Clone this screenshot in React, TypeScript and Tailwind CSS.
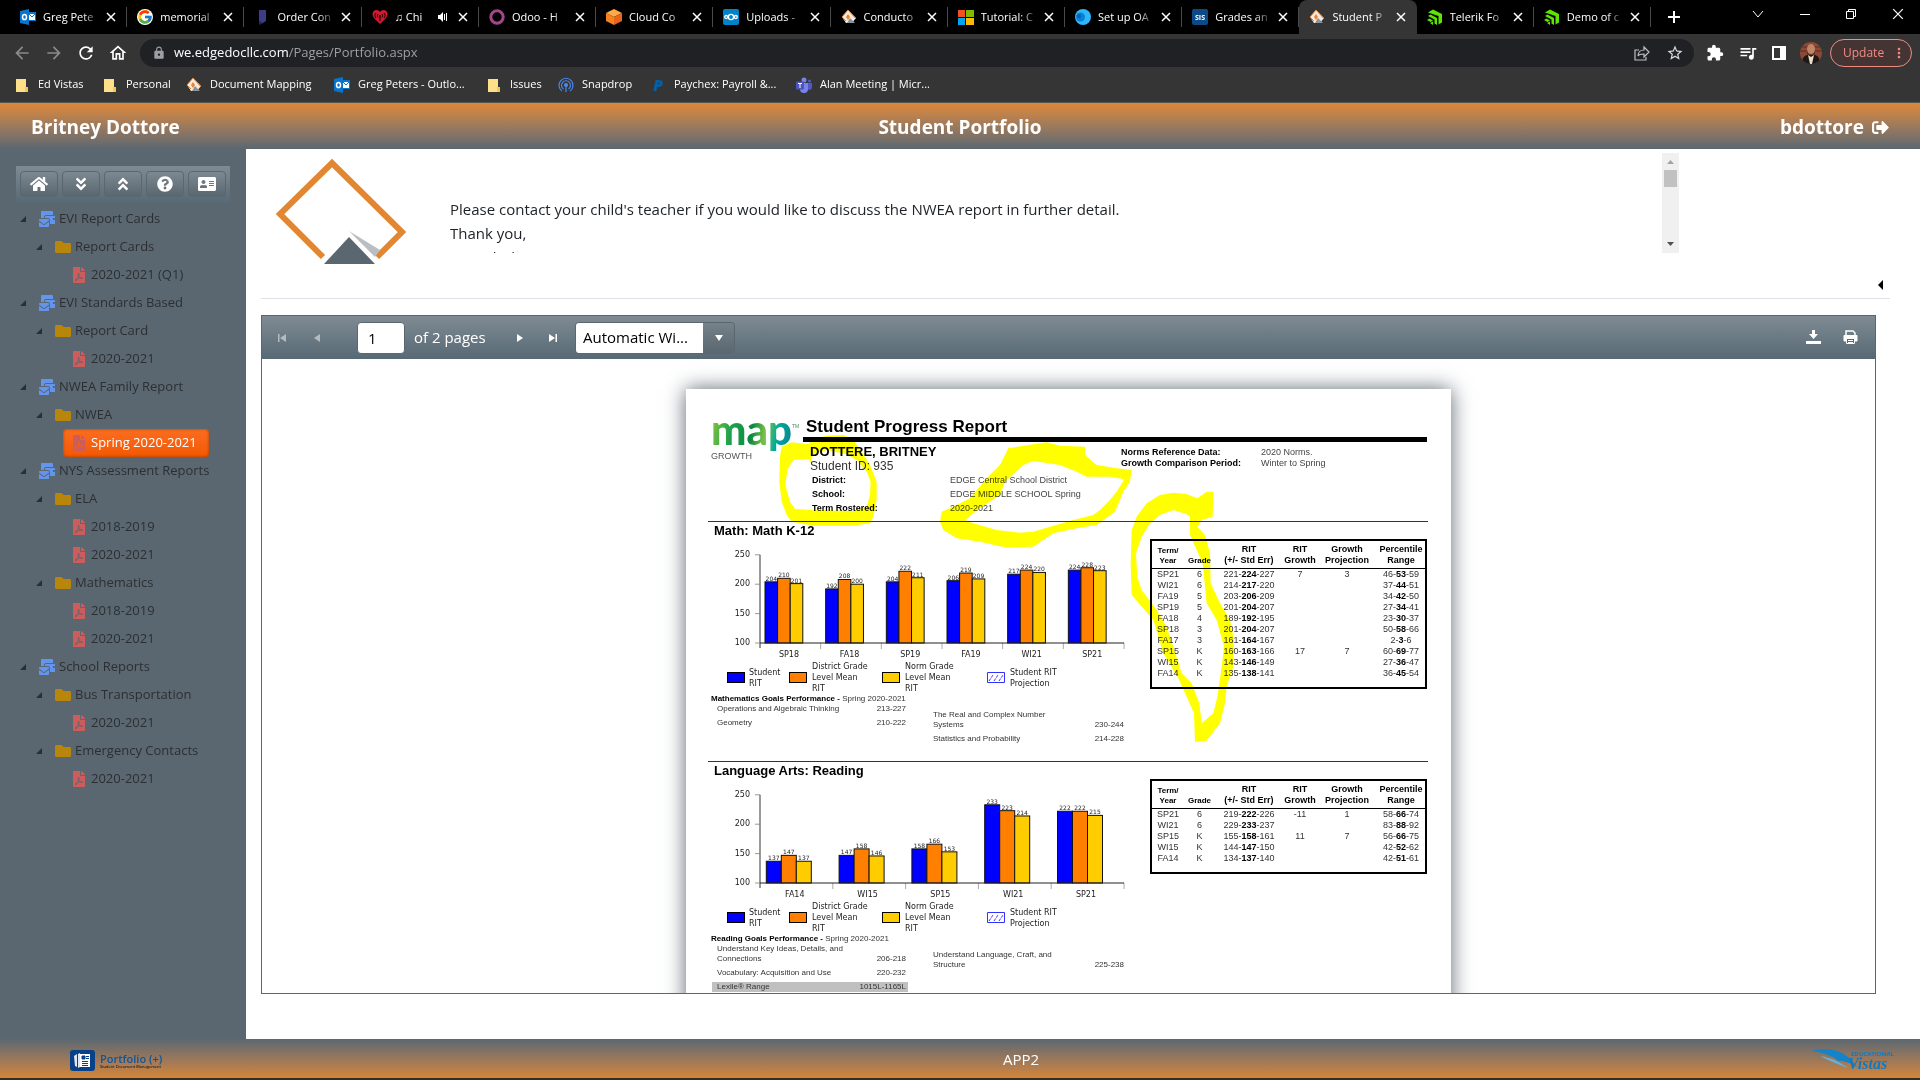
import type { ReactNode } from "react";
import { clsx } from "clsx";
import { FcGoogle } from "react-icons/fc";
import {
	FaAddressCard,
	FaAngleDoubleDown,
	FaAngleDoubleUp,
	FaFilePdf,
	FaFolder,
	FaHome,
	FaMailBulk,
	FaQuestionCircle,
	FaSignOutAlt,
} from "react-icons/fa";
import { MdArrowBack, MdArrowForward, MdExtension, MdLock, MdMoreVert, MdOutlineHome, MdQueueMusic, MdRefresh, MdStarBorder } from "react-icons/md";

/* ---------- small brand marks ---------- */

function OutlookMark() {
	return (
		<svg viewBox="0 0 16 16" className="size-4 shrink-0">
			<path d="M8 3h8v9H8z" fill="#0a74cc" />
			<path d="M9 5h6v6H9z" fill="#fff" />
			<path d="m9 5 3 3 3-3" stroke="#0a74cc" fill="none" />
			<path d="M0 2l9-2v16l-9-2z" fill="#0a74cc" />
			<ellipse cx="4.5" cy="8" rx="2" ry="2.6" fill="none" stroke="#fff" strokeWidth="1.5" />
		</svg>
	);
}

function OrderMark() {
	return (
		<svg viewBox="0 0 16 16" className="size-4 shrink-0">
			<path d="M5 1h7v11l-3 2-4 1z" fill="#3b3d86" />
			<path d="M5 12l4 2-4 2z" fill="#25265c" />
		</svg>
	);
}

function HeartMark() {
	return (
		<svg viewBox="0 0 16 16" className="size-4 shrink-0">
			<path d="M8 15 2 9C-1 5 1 1 4.500 1 6 1 7.300 1.800 8 3 8.700 1.800 10 1 11.500 1 15 1 17 5 14 9z" fill="#d5182f" />
			<path d="M4 4c-1.500 1.500-1.500 3.500 0 5M6 5c-.8 1-.8 2.500 0 3.500M12 4c1.500 1.500 1.500 3.500 0 5M10 5c.8 1 .8 2.500 0 3.500M8 8v4" stroke="#000" fill="none" />
			<circle cx="8" cy="7" r="1" fill="#000" />
		</svg>
	);
}

function OdooMark() {
	return (
		<svg viewBox="0 0 16 16" className="size-4 shrink-0">
			<circle cx="8" cy="8" r="6.200" fill="none" stroke="#a24689" strokeWidth="3" />
		</svg>
	);
}

function CubeMark() {
	return (
		<svg viewBox="0 0 16 16" className="size-4 shrink-0">
			<path d="m8 0 8 4-8 4-8-4z" fill="#ffa94a" />
			<path d="m0 4 8 4v8l-8-4z" fill="#f58220" />
			<path d="m16 4-8 4v8l8-4z" fill="#e8641b" />
		</svg>
	);
}

function CloudMark() {
	return (
		<svg viewBox="0 0 16 16" className="size-4 shrink-0">
			<rect width="16" height="16" rx="2" fill="#0082c9" />
			<g fill="none" stroke="#fff" strokeWidth="1.300">
				<circle cx="8" cy="8" r="2.600" />
				<circle cx="3.200" cy="8" r="1.500" />
				<circle cx="12.800" cy="8" r="1.500" />
			</g>
		</svg>
	);
}

function DiamondMark() {
	return (
		<svg viewBox="0 0 16 16" className="size-4 shrink-0">
			<path d="M7 1 15 9l-4 5H5L1 8z" fill="#fbe9dc" />
			<path d="M7 1 1 8l4 4M7 1l8 9" fill="none" stroke="#e58636" />
			<path d="m7 5 2 3-2 3-2-3z" fill="#e58636" />
			<path d="m9 9 5 5H6z" fill="#8b939a" />
		</svg>
	);
}

function WindowsMark() {
	return (
		<svg viewBox="0 0 16 16" className="size-4 shrink-0">
			<path d="M0 1h7v7H0z" fill="#f25022" />
			<path d="M8 1h8v7H8z" fill="#7fba00" />
			<path d="M0 9h7v7H0z" fill="#00a4ef" />
			<path d="M8 9h8v7H8z" fill="#ffb900" />
		</svg>
	);
}

function SwirlMark() {
	return (
		<svg viewBox="0 0 16 16" className="size-4 shrink-0">
			<circle cx="8" cy="8" r="8" fill="#2eb8fa" />
			<circle cx="5.500" cy="8" r="4.500" fill="#0a7ed8" />
			<circle cx="4" cy="7" r="2" fill="#0561ad" />
		</svg>
	);
}

function SisMark() {
	return (
		<svg viewBox="0 0 16 16" className="size-4 shrink-0">
			<rect width="16" height="16" rx="2" fill="#0b4a86" />
			<text x="8" y="10.500" textAnchor="middle" fontSize="7" fontFamily="Open Sans, sans-serif" fontWeight="700" fill="#fff">
				SIS
			</text>
		</svg>
	);
}

function TelerikMark() {
	return (
		<svg viewBox="0 0 16 16" className="size-4 shrink-0" fill="#5ce500">
			<path d="M1 3.500 6 .5l9 4.500v8.500l-3.500 2V7z" />
			<path d="m1 7 2.500-1.500L10 9v7l-2.500-1.500V10.500z" />
			<path d="m0 11 2.500-1.500L6 11.500 3.500 13z" />
			<path d="m3 14 3-1.500V16z" />
		</svg>
	);
}

function FolderMark() {
	return (
		<svg viewBox="0 0 16 16" className="size-4 shrink-0">
			<path d="M2 2h10v13H2z" fill="#ffe08a" />
			<path d="M11 10h3v5h-3z" fill="#f2c94c" />
		</svg>
	);
}

function SnapdropMark() {
	return (
		<svg viewBox="0 0 16 16" className="size-4 shrink-0" fill="none" stroke="#4a86e8" strokeWidth="1.200">
			<path d="M4 14a7 7 0 1 1 8 0" />
			<path d="M5.500 12a4.500 4.500 0 1 1 5 0" />
			<circle cx="8" cy="8" r="1.500" fill="#4a86e8" />
			<path d="M8 9v6" />
		</svg>
	);
}

function PaychexMark() {
	return <span className="w-4 text-center text-base/4 font-extrabold text-[#0560a8] italic">P</span>;
}

function TeamsMark() {
	return (
		<svg viewBox="0 0 16 16" className="size-4 shrink-0">
			<circle cx="8" cy="3" r="2.500" fill="#7b83eb" />
			<circle cx="13.500" cy="4" r="1.600" fill="#5059c9" />
			<path d="M11 6h5v5a3 3 0 0 1-5 1z" fill="#5059c9" />
			<path d="M4 6h8v6a4 4 0 0 1-8 0z" fill="#7b83eb" />
			<rect y="4.500" width="8" height="8" rx="1" fill="#4b53bc" />
			<path d="M2 6.500h4M4 6.500V11" stroke="#fff" />
		</svg>
	);
}

/* ---------- browser chrome ---------- */

type TabItem = { title: string; icon: ReactNode; active?: boolean; sound?: boolean };

const tabs: TabItem[] = [
	{ title: "Greg Pete", icon: <OutlookMark /> },
	{ title: "memorial", icon: <FcGoogle className="size-4 shrink-0 rounded-full bg-white" /> },
	{ title: "Order Con", icon: <OrderMark /> },
	{ title: "♫ Chi", icon: <HeartMark />, sound: true },
	{ title: "Odoo - H", icon: <OdooMark /> },
	{ title: "Cloud Co", icon: <CubeMark /> },
	{ title: "Uploads -", icon: <CloudMark /> },
	{ title: "Conducto", icon: <DiamondMark /> },
	{ title: "Tutorial: C", icon: <WindowsMark /> },
	{ title: "Set up OA", icon: <SwirlMark /> },
	{ title: "Grades an", icon: <SisMark /> },
	{ title: "Student P", icon: <DiamondMark />, active: true },
	{ title: "Telerik Fo", icon: <TelerikMark /> },
	{ title: "Demo of c", icon: <TelerikMark /> },
];

const bookmarks = [
	{ label: "Ed Vistas", icon: <FolderMark />, width: "w-[88px]" },
	{ label: "Personal", icon: <FolderMark />, width: "w-[84px]" },
	{ label: "Document Mapping", icon: <DiamondMark />, width: "w-[148px]" },
	{ label: "Greg Peters - Outlo...", icon: <OutlookMark />, width: "w-[152px]" },
	{ label: "Issues", icon: <FolderMark />, width: "w-[72px]" },
	{ label: "Snapdrop", icon: <SnapdropMark />, width: "w-[92px]" },
	{ label: "Paychex: Payroll &...", icon: <PaychexMark />, width: "w-[146px]" },
	{ label: "Alan Meeting | Micr...", icon: <TeamsMark />, width: "w-[150px]" },
];

function CloseGlyph({ className }: { className: string }) {
	return (
		<svg viewBox="0 0 10 10" className={className} fill="none" stroke="currentColor">
			<path d="m1 1 8 8M9 1 1 9" />
		</svg>
	);
}

function BrowserTab({ title, icon, active, sound }: TabItem) {
	return (
		<div
			className={clsx("flex min-w-0 flex-1 items-center pl-2.5", active ? "rounded-t-lg bg-[#353535]" : "bg-black")}
		>
			{icon}
			<span className="ml-[7px] min-w-0 flex-1 mask-r-from-70% whitespace-nowrap">{title}</span>
			{sound && (
				<svg viewBox="0 0 10 10" className="mr-1 size-2.5 shrink-0" fill="#fff">
					<path d="M0 3h2l3-3v10L2 7H0z" />
					<path d="M6.500 2v6M8.500 1v8" stroke="#fff" />
				</svg>
			)}
			<button type="button" aria-label="Close tab" className="mr-2.5 ml-1.5">
				<CloseGlyph className="size-2.5 stroke-[1.500]" />
			</button>
			<span className={clsx("h-5 w-px", active ? "bg-transparent" : "bg-[#4a4a4a]")} />
		</div>
	);
}

function BrowserChrome() {
	return (
		<div className="shrink-0 bg-[#353535] text-[11px] text-white">
			<div className="flex h-[34px] bg-black pl-2.5">
				<div className="flex min-w-0 shrink basis-[1641px]">
					{tabs.map((tab) => (
						<BrowserTab key={tab.title} {...tab} />
					))}
				</div>
				<div className="flex min-w-60 flex-1 items-center justify-between pl-4">
					<button type="button" aria-label="New tab">
						<svg viewBox="0 0 14 14" className="size-3.5" stroke="#fff" strokeWidth="2">
							<path d="M7 1v12M1 7h12" />
						</svg>
					</button>
					<div className="flex items-center gap-9 pr-4 pb-1.5">
						<button type="button" aria-label="Search tabs">
							<svg viewBox="0 0 12 12" className="size-3" fill="none" stroke="#fff">
								<path d="m1 3 5 6 5-6" />
							</svg>
						</button>
						<button type="button" aria-label="Minimize">
							<svg viewBox="0 0 10 10" className="size-2.5" stroke="#fff">
								<path d="M0 5.500h10" />
							</svg>
						</button>
						<button type="button" aria-label="Restore">
							<svg viewBox="0 0 10 10" className="size-2.5" fill="none" stroke="#fff">
								<path d="M.5 2.500h7v7h-7zM2.500 2.500v-2h7v7h-2" />
							</svg>
						</button>
						<button type="button" aria-label="Close window">
							<CloseGlyph className="size-3" />
						</button>
					</div>
				</div>
			</div>

			<div className="flex h-[35px] items-center pt-1 pr-2 pb-0.5 pl-3">
				<div className="flex w-32 items-center gap-3">
					<MdArrowBack className="size-5 text-[#8a8a8a]" />
					<MdArrowForward className="size-5 text-[#8a8a8a]" />
					<MdRefresh className="size-5" />
					<MdOutlineHome className="size-5" />
				</div>
				<div className="flex h-7 flex-1 items-center gap-2 rounded-full bg-[#202124] pr-2.5 pl-3">
					<MdLock className="size-3.5 text-[#9aa0a6]" />
					<p className="flex-1 text-[13px] text-[#9aa0a6]">
						<span className="text-white">we.edgedocllc.com</span>/Pages/Portfolio.aspx
					</p>
					<svg viewBox="0 0 16 16" className="mr-2 size-4" fill="none" stroke="#bdc1c6" strokeWidth="1.200">
						<path d="M5 5H1v10h11v-3M4 11c0-4 3-6 6-6V2l5 5-5 5V9c-3 0-5 0-6 2z" />
					</svg>
					<MdStarBorder className="size-[18px] text-[#dadce0]" />
				</div>
				<div className="flex items-center gap-3.5 pl-3">
					<MdExtension className="size-[18px]" />
					<MdQueueMusic className="size-5" />
					<svg viewBox="0 0 14 14" className="size-3.5">
						<path d="M0 0h14v14H0zM2 2v10h6V2z" fill="#fff" fillRule="evenodd" />
					</svg>
					<svg viewBox="0 0 22 22" className="size-[22px] rounded-full">
						<path d="M0 0h22v22H0z" fill="#8a4a35" />
						<path d="M0 5h22M0 9h22" stroke="#5e2d22" />
						<ellipse cx="11" cy="7" rx="4" ry="5" fill="#c08468" />
						<path d="M7 9c1 5 7 5 8 0v3l-4 2-4-2z" fill="#4a2a20" />
						<path d="M2 22c0-7 3-9 6-9h6c3 0 6 2 6 9z" fill="#1d1715" />
						<path d="m8 13 3 2 3-2-2 9h-2z" fill="#e8dfc8" />
					</svg>
				</div>
				<button
					type="button"
					className="ml-2 flex h-7 w-[82px] items-center justify-between rounded-full border border-[#f28b82] bg-[#443534] pr-1 pl-3 text-xs text-[#f28b82]"
				>
					Update
					<MdMoreVert className="size-4" />
				</button>
			</div>

			<nav className="flex h-[34px] items-center border-b border-[#555] pb-0.5 pl-3.5 whitespace-nowrap">
				{bookmarks.map((b) => (
					<a key={b.label} href="#" className={clsx("flex items-center gap-2", b.width)}>
						{b.icon}
						{b.label}
					</a>
				))}
			</nav>
		</div>
	);
}

/* ---------- sidebar ---------- */

type NodeKind = "root" | "folder" | "file";

const tree: { kind: NodeKind; label: string; selected?: boolean }[] = [
	{ kind: "root", label: "EVI Report Cards" },
	{ kind: "folder", label: "Report Cards" },
	{ kind: "file", label: "2020-2021 (Q1)" },
	{ kind: "root", label: "EVI Standards Based" },
	{ kind: "folder", label: "Report Card" },
	{ kind: "file", label: "2020-2021" },
	{ kind: "root", label: "NWEA Family Report" },
	{ kind: "folder", label: "NWEA" },
	{ kind: "file", label: "Spring 2020-2021", selected: true },
	{ kind: "root", label: "NYS Assessment Reports" },
	{ kind: "folder", label: "ELA" },
	{ kind: "file", label: "2018-2019" },
	{ kind: "file", label: "2020-2021" },
	{ kind: "folder", label: "Mathematics" },
	{ kind: "file", label: "2018-2019" },
	{ kind: "file", label: "2020-2021" },
	{ kind: "root", label: "School Reports" },
	{ kind: "folder", label: "Bus Transportation" },
	{ kind: "file", label: "2020-2021" },
	{ kind: "folder", label: "Emergency Contacts" },
	{ kind: "file", label: "2020-2021" },
];

const sidebarButtons = [
	{ label: "Home", icon: <FaHome className="size-[18px]" /> },
	{ label: "Expand all", icon: <FaAngleDoubleDown className="size-4" /> },
	{ label: "Collapse all", icon: <FaAngleDoubleUp className="size-4" /> },
	{ label: "Help", icon: <FaQuestionCircle className="size-4" /> },
	{ label: "Contacts", icon: <FaAddressCard className="size-[18px]" /> },
];

function TreeIcon({ kind }: { kind: NodeKind }) {
	if (kind === "root")
		return (
			<span className="w-4 shrink-0 overflow-hidden">
				<FaMailBulk className="h-4 w-[18px] max-w-none text-[#6495ed]" />
			</span>
		);
	if (kind === "folder") return <FaFolder className="size-4 shrink-0 text-[#b8860b]" />;
	return <FaFilePdf className="mr-0.5 h-4 w-3 shrink-0 text-[#cd5c5c]" />;
}

function Sidebar() {
	return (
		<aside className="w-[246px] shrink-0 bg-[#5b6770] pt-[17px]">
			<div className="mx-4 flex h-[37px] gap-1 bg-linear-to-b from-[#7f8b93] to-[#576975] px-1 pt-[5px]">
				{sidebarButtons.map((b) => (
					<button
						key={b.label}
						type="button"
						aria-label={b.label}
						className="flex h-[26px] w-[38px] items-center justify-center rounded border border-[#5b6770] bg-linear-to-b from-[#7d8991] to-[#5b6770] text-white"
					>
						{b.icon}
					</button>
				))}
			</div>
			<ul className="mt-0.5 pl-5 text-[13px] text-[#2b2f33]">
				{tree.map((node, i) => (
					<li
						key={i}
						className={clsx("flex h-7 items-center", node.kind === "folder" && "pl-4", node.kind === "file" && "pl-[43px]")}
					>
						{node.kind !== "file" && (
							<svg viewBox="0 0 6 6" className="mr-[13px] size-1.5" fill="#2b2f33">
								<path d="M6 0v6H0z" />
							</svg>
						)}
						<a
							href="#"
							className={clsx(
								"flex h-7 items-center gap-1",
								node.kind === "file" && "pr-3 pl-2.5",
								node.selected && "rounded bg-linear-to-b from-[#fb6d1f] to-[#f35800] text-white shadow-[inset_0_0_3px_#a33c00]",
							)}
						>
							<TreeIcon kind={node.kind} />
							<span>{node.label}</span>
						</a>
					</li>
				))}
			</ul>
		</aside>
	);
}

/* ---------- report ---------- */

type Chart = { terms: string[]; values: number[][]; offset: number; bar: number };

const mathChart: Chart = {
	terms: ["SP18", "FA18", "SP19", "FA19", "WI21", "SP21"],
	values: [
		[204, 210, 201],
		[192, 208, 200],
		[204, 222, 211],
		[206, 219, 209],
		[217, 224, 220],
		[224, 228, 223],
	],
	offset: 5,
	bar: 12.6,
};

const readingChart: Chart = {
	terms: ["FA14", "WI15", "SP15", "WI21", "SP21"],
	values: [
		[137, 147, 137],
		[147, 158, 146],
		[158, 166, 153],
		[233, 223, 214],
		[222, 222, 215],
	],
	offset: 6.3,
	bar: 15,
};

const seriesColors = ["#0000ff", "#ff8000", "#ffcc00"];

function BarChart({ terms, values, offset, bar }: Chart) {
	const left = 52;
	const base = 103;
	const pitch = 364 / terms.length;
	const y = (v: number) => base - (v - 100) * 0.588;

	return (
		<svg viewBox="0 0 420 121" className="block h-[121px] w-[420px]" fontFamily="DejaVu Sans, sans-serif">
			{[100, 150, 200, 250].map((v) => (
				<g key={v}>
					<path d={`M${left - 5} ${y(v)}h5`} stroke="#999" />
					<text x={left - 10} y={y(v) + 2} textAnchor="end" fontSize="8" fill="#222">
						{v}
					</text>
				</g>
			))}
			<path d={`M${left} ${y(250)}V${base + 5}`} stroke="#777" strokeWidth="1.500" />
			{terms.map((term, i) => {
				const x = left + pitch * i;
				return (
					<g key={term}>
						<path d={`M${x + pitch} ${base}v6`} stroke="#aaa" />
						{values[i].map((v, s) => (
							<g key={s}>
								<rect
									x={x + offset + bar * s}
									y={y(v)}
									width={bar}
									height={base - y(v)}
									fill={seriesColors[s]}
									stroke="#111"
									strokeWidth="1"
								/>
								<text x={x + offset + bar * (s + 0.5)} y={y(v) - 1} textAnchor="middle" fontSize="6" fill="#222">
									{v}
								</text>
							</g>
						))}
						<text x={x + offset + bar * 1.9} y="117" textAnchor="middle" fontSize="8" fill="#222">
							{term}
						</text>
					</g>
				);
			})}
			<path d={`M${left} ${base}h364`} stroke="#222" />
		</svg>
	);
}

function Legend() {
	const swatch = "h-[11px] w-[18px] shrink-0 border border-black";
	return (
		<div className="flex h-[33px] items-center pl-[19px] font-['DejaVu_Sans',sans-serif] text-[8px]/[11px] text-[#222]">
			<div className="flex w-[62px] items-center gap-1">
				<span className={clsx(swatch, "bg-[#0000ff]")} />
				<span>
					Student
					<br />
					RIT
				</span>
			</div>
			<div className="flex w-[93px] items-center gap-[5px]">
				<span className={clsx(swatch, "bg-[#ff8000]")} />
				<span>
					District Grade
					<br />
					Level Mean
					<br />
					RIT
				</span>
			</div>
			<div className="flex w-[105px] items-center gap-[5px]">
				<span className={clsx(swatch, "bg-[#ffcc00]")} />
				<span>
					Norm Grade
					<br />
					Level Mean
					<br />
					RIT
				</span>
			</div>
			<div className="flex items-center gap-[5px]">
				<svg viewBox="0 0 18 11" className="h-[11px] w-[18px] shrink-0" fill="none" stroke="#3333ff">
					<path d="M.5.5h17v10H.5z" />
					<path d="m2 9 4-6M7 9l4-6M12 9l4-6" strokeDasharray="3 1" />
				</svg>
				<span>
					Student RIT
					<br />
					Projection
				</span>
			</div>
		</div>
	);
}

type Goal = { label: string[]; range: string; shaded?: boolean };

function Goals({ items }: { items: Goal[] }) {
	return (
		<dl className="flex flex-col gap-1">
			{items.map((g) => (
				<div
					key={g.range}
					className={clsx("flex items-end justify-between pr-0.5 pl-[5px]", g.shaded && "bg-[#c0c0c0]")}
				>
					<dt>
						{g.label.map((line) => (
							<span key={line} className="block">
								{line}
							</span>
						))}
					</dt>
					<dd>{g.range}</dd>
				</div>
			))}
		</dl>
	);
}

// term, grade, low, rit, high, growth, projection, percentile low / mid / high
type Row = [string, string, number, number, number, string, string, number, number, number];

const mathRows: Row[] = [
	["SP21", "6", 221, 224, 227, "7", "3", 46, 53, 59],
	["WI21", "6", 214, 217, 220, "", "", 37, 44, 51],
	["FA19", "5", 203, 206, 209, "", "", 34, 42, 50],
	["SP19", "5", 201, 204, 207, "", "", 27, 34, 41],
	["FA18", "4", 189, 192, 195, "", "", 23, 30, 37],
	["SP18", "3", 201, 204, 207, "", "", 50, 58, 66],
	["FA17", "3", 161, 164, 167, "", "", 2, 3, 6],
	["SP15", "K", 160, 163, 166, "17", "7", 60, 69, 77],
	["WI15", "K", 143, 146, 149, "", "", 27, 36, 47],
	["FA14", "K", 135, 138, 141, "", "", 36, 45, 54],
];

const readingRows: Row[] = [
	["SP21", "6", 219, 222, 226, "-11", "1", 58, 66, 74],
	["WI21", "6", 229, 233, 237, "", "", 83, 88, 92],
	["SP15", "K", 155, 158, 161, "11", "7", 56, 66, 75],
	["WI15", "K", 144, 147, 150, "", "", 42, 52, 62],
	["FA14", "K", 134, 137, 140, "", "", 42, 51, 61],
];

function RitTable({ rows }: { rows: Row[] }) {
	return (
		<div className="mt-[17px] w-[277px] self-start border-2 border-black pb-2">
			<table className="w-full table-fixed text-center text-[9px]/[11px] text-[#333]">
				<colgroup>
					<col className="w-8" />
					<col className="w-[31px]" />
					<col className="w-[68px]" />
					<col className="w-[34px]" />
					<col className="w-[60px]" />
					<col className="w-12" />
				</colgroup>
				<thead>
					<tr className="h-[27px] border-b border-black align-bottom text-black *:px-0 *:pb-0.5 *:whitespace-nowrap">
						<th className="text-[8px]/[10px]">
							Term/
							<br />
							Year
						</th>
						<th className="text-[8px]/[10px]">Grade</th>
						<th>
							RIT
							<br />
							(+/- Std Err)
						</th>
						<th>
							RIT
							<br />
							Growth
						</th>
						<th>
							Growth
							<br />
							Projection
						</th>
						<th>
							Percentile
							<br />
							Range
						</th>
					</tr>
				</thead>
				<tbody>
					{rows.map(([term, grade, low, rit, high, growth, projection, pLow, pMid, pHigh]) => (
						<tr key={term} className="whitespace-nowrap">
							<td>{term}</td>
							<td>{grade}</td>
							<td>
								{low}-<b className="text-black">{rit}</b>-{high}
							</td>
							<td>{growth}</td>
							<td>{projection}</td>
							<td>
								{pLow}-<b className="text-black">{pMid}</b>-{pHigh}
							</td>
						</tr>
					))}
				</tbody>
			</table>
		</div>
	);
}

type SectionProps = { title: string; subject: string; chart: Chart; rows: Row[]; left: Goal[]; right: Goal[] };

function Section({ title, subject, chart, rows, left, right }: SectionProps) {
	return (
		<section className="flex h-60 justify-between border-t border-[#333] pr-px">
			<div className="w-[420px]">
				<h3 className="pl-1.5 text-[13px]/[18px] font-bold text-black">{title}</h3>
				<BarChart {...chart} />
				<Legend />
				<div className="pl-[3px] text-[8px]/[10px] text-[#333]">
					<p>
						<b className="text-black">{subject} Goals Performance -</b> Spring 2020-2021
					</p>
					<div className="flex justify-between pl-px">
						<div className="w-[196px]">
							<Goals items={left} />
						</div>
						<div className="w-[200px] pt-1.5 pr-0.5">
							<Goals items={right} />
						</div>
					</div>
				</div>
			</div>
			<RitTable rows={rows} />
		</section>
	);
}

// Marker strokes laid over the page, as on a highlighted printout
function Highlighter() {
	return (
		<svg
			viewBox="0 0 765 360"
			className="pointer-events-none absolute top-0 left-0 h-[360px] w-[765px] mix-blend-multiply"
			fill="#ffff00"
			fillRule="evenodd"
		>
			<g transform="translate(-6 -4) scale(.33333)">
				<path d="M300 215 305 185 335 172 385 178 400 162 440 152 490 150 520 165 545 200 570 240 590 290 590 345 580 395 570 415 520 422 400 422 335 410 320 390 305 350 298 290zM388 222 340 225 322 255 316 300 330 350 345 372 400 375 520 378 560 365 570 330 572 290 560 260 530 225 500 208 440 195 400 208 390 235z" />
				<path d="M780 410 785 380 830 360 870 340 920 280 960 240 985 190 1060 178 1100 172 1140 182 1215 185 1215 210 1250 240 1310 250 1355 255 1350 290 1330 320 1305 380 1250 420 1190 430 1120 445 1060 485 980 488 900 470 830 460 790 435zM855 405 900 370 960 330 975 290 1030 240 1060 228 1140 240 1190 260 1220 275 1290 275 1333 283 1310 320 1290 345 1260 375 1240 390 1180 405 1110 425 1060 440 1020 443 950 435 880 415z" />
			</g>
			<g transform="translate(424 31) scale(.33333)">
				<path d="M62 430 65 330 80 290 110 250 150 225 190 218 230 222 262 235 290 215 310 215 308 290 275 300 262 320 285 345 300 400 302 490 330 550 360 600 372 660 370 740 350 800 345 850 330 910 290 962 255 965 252 880 230 830 205 775 160 700 130 600 65 525zM82 470 78 400 95 350 120 310 150 285 190 270 230 283 240 290 240 345 260 390 278 430 285 500 290 550 320 600 342 680 335 740 322 830 310 880 275 910 268 850 245 790 215 760 190 680 170 620 140 570 95 510z" />
			</g>
		</svg>
	);
}

function ReportPage() {
	return (
		<article className="relative h-[990px] w-[765px] shrink-0 bg-white pt-[26px] pr-[23px] pl-[22px] font-['Liberation_Sans',sans-serif] text-black shadow-[0_0_20px_#5b6770]">
			<header className="flex h-[106px] pr-px">
				<div className="w-[95px] pl-[3px]">
					<div className="flex h-[37px] items-start">
						<span className="bg-[linear-gradient(100deg,#8cc63f,#1fa34a_25%,#0b8a43_50%,#7ac143_65%,#00a99d_80%,#0d7f8c)] bg-clip-text pb-2 font-['Lato',sans-serif] text-[42px]/7 font-black text-transparent">
							map
						</span>
						<sup className="top-0 pt-1.5 text-[5px]/[10px] text-[#4a8a60]">TM</sup>
					</div>
					<p className="text-[9px]/[8px] text-[#555]">GROWTH</p>
				</div>
				<div className="flex-1">
					<h2 className="h-[22px] pl-[3px] text-[17px]/6 font-bold">Student Progress Report</h2>
					<div className="h-[5px] bg-black" />
					<div className="flex justify-between pt-[3px] pl-[7px]">
						<div>
							<p className="text-[13px]/[14px] font-bold">DOTTERE, BRITNEY</p>
							<p className="text-[12px]/[14px] text-[#333]">Student ID: 935</p>
							<dl className="grid grid-cols-[138px_auto] pl-0.5 text-[9px]/[14px] text-[#444]">
								<dt className="font-bold text-black">District:</dt>
								<dd>EDGE Central School District</dd>
								<dt className="font-bold text-black">School:</dt>
								<dd>EDGE MIDDLE SCHOOL Spring</dd>
								<dt className="font-bold text-black">Term Rostered:</dt>
								<dd>2020-2021</dd>
							</dl>
						</div>
						<dl className="grid w-[306px] grid-cols-[140px_1fr] content-start pt-0.5 text-[9px]/[11px] text-[#444]">
							<dt className="font-bold text-black">Norms Reference Data:</dt>
							<dd>2020 Norms.</dd>
							<dt className="font-bold text-black">Growth Comparison Period:</dt>
							<dd>Winter to Spring</dd>
						</dl>
					</div>
				</div>
			</header>
			<Section
				title="Math: Math K-12"
				subject="Mathematics"
				chart={mathChart}
				rows={mathRows}
				left={[
					{ label: ["Operations and Algebraic Thinking"], range: "213-227" },
					{ label: ["Geometry"], range: "210-222" },
				]}
				right={[
					{ label: ["The Real and Complex Number", "Systems"], range: "230-244" },
					{ label: ["Statistics and Probability"], range: "214-228" },
				]}
			/>
			<Section
				title="Language Arts: Reading"
				subject="Reading"
				chart={readingChart}
				rows={readingRows}
				left={[
					{ label: ["Understand Key Ideas, Details, and", "Connections"], range: "206-218" },
					{ label: ["Vocabulary: Acquisition and Use"], range: "220-232" },
					{ label: ["Lexile® Range"], range: "1015L-1165L", shaded: true },
				]}
				right={[{ label: ["Understand Language, Craft, and", "Structure"], range: "225-238" }]}
			/>
			<Highlighter />
		</article>
	);
}

/* ---------- viewer ---------- */

function PagerIcon({ d, dim }: { d: string; dim?: boolean }) {
	return (
		<svg viewBox="0 0 8 8" className={clsx("size-2", dim ? "text-[#b4bbc0]" : "text-white")} fill="currentColor">
			<path d={d} />
		</svg>
	);
}

function ViewerToolbar() {
	return (
		<div className="flex h-[43px] shrink-0 items-center justify-between bg-linear-to-b from-[#7f8b93] to-[#576975] pr-[17px] pl-4 text-[15px] text-white">
			<div className="flex items-center">
				<button type="button" aria-label="First page" className="w-[35px]">
					<PagerIcon dim d="M0 0h1.500v8H0zM8 0v8L2 4z" />
				</button>
				<button type="button" aria-label="Previous page" className="w-11">
					<PagerIcon dim d="M7 0v8L1 4z" />
				</button>
				<input
					aria-label="Page number"
					defaultValue="1"
					className="h-8 w-12 rounded border border-[#5b6770] bg-white px-2.5 text-black"
				/>
				<span className="w-[105px] pl-[9px]">of 2 pages</span>
				<button type="button" aria-label="Next page" className="w-[33px] pl-1.5">
					<PagerIcon d="M1 0v8l6-4z" />
				</button>
				<button type="button" aria-label="Last page" className="w-8 pl-1.5">
					<PagerIcon d="M0 0v8l6-4zM6.500 0H8v8H6.500z" />
				</button>
				<div className="flex h-8 w-40 overflow-hidden rounded border border-[#5b6770]">
					<select aria-label="Zoom" className="w-[127px] appearance-none bg-white pl-[7px] text-black">
						<option>Automatic Wi...</option>
					</select>
					<button
						type="button"
						aria-label="Open zoom list"
						className="flex flex-1 items-center justify-center rounded bg-linear-to-b from-[#75828a] to-[#5b6770]"
					>
						<PagerIcon d="M0 1h8L4 7z" />
					</button>
				</div>
			</div>
			<div className="flex items-center gap-[22px]">
				<button type="button" aria-label="Download">
					<svg viewBox="0 0 15 15" className="size-[15px]" fill="#fff">
						<path d="M6 0h3v4h3L7.500 9 3 4h3zM0 11h15v3H0z" />
					</svg>
				</button>
				<button type="button" aria-label="Print">
					<svg viewBox="0 0 15 15" className="size-[15px]" fill="none" stroke="#fff">
						<path d="M3 6V1h7l2 2v3" strokeWidth="1.500" />
						<path d="M1 5.500h13V11H1z" fill="#fff" />
						<path d="M3.500 8.500h8v5h-8z" fill="#5b6770" />
						<path d="M5 10.500h5M5 12.500h5" />
					</svg>
				</button>
			</div>
		</div>
	);
}

function EdgeLogo() {
	return (
		<svg viewBox="0 0 130 107" className="h-[107px] w-[130px] shrink-0">
			<path d="M47 99 4 56 56 5l70 69-25 25" fill="none" stroke="#e38631" strokeWidth="6" />
			<path d="m73 73 31 19-5 7z" fill="#babec3" />
			<path d="m73 79 26 27H48z" fill="#5b6770" />
		</svg>
	);
}

function Message() {
	return (
		<div className="flex h-[145px] shrink-0 pl-[15px]">
			<div className="pt-[5px]">
				<EdgeLogo />
			</div>
			<div className="ml-11 h-[100px] max-w-[1212px] flex-1 overflow-hidden pt-11 text-[15px]/6 text-[#212529]">
				<p>Please contact your child&apos;s teacher if you would like to discuss the NWEA report in further detail.</p>
				<p>Thank you,</p>
				<p>Mr. Schult</p>
			</div>
			<div className="flex h-[100px] w-[17px] flex-col items-center justify-between bg-[#f0f0f0] py-[7px]">
				<svg viewBox="0 0 7 4" className="h-1 w-[7px]" fill="#a3a3a3">
					<path d="M3.500 0 7 4H0z" />
				</svg>
				<span className="mt-1.5 h-[17px] w-[13px] bg-[#c1c1c1]" />
				<span className="flex-1" />
				<svg viewBox="0 0 7 4" className="h-1 w-[7px]" fill="#505050">
					<path d="M3.500 4 7 0H0z" />
				</svg>
			</div>
			<button type="button" aria-label="Collapse message" className="mb-2 ml-auto self-end pr-[7px]">
				<svg viewBox="0 0 5 10" className="h-2.5 w-[5px]" fill="#000">
					<path d="M5 0v10L0 5z" />
				</svg>
			</button>
		</div>
	);
}

/* ---------- app ---------- */

export default function App() {
	return (
		<div className="flex h-screen flex-col overflow-hidden bg-[#352c24] font-['Open_Sans','Noto_Sans',sans-serif]">
			<BrowserChrome />

			<header className="grid h-[46px] shrink-0 grid-cols-3 items-center bg-linear-to-b from-[#de8832] to-[#5b6770] px-[31px] pt-0.5 text-[19px] font-bold text-white">
				<span>Britney Dottore</span>
				<h1 className="text-center">Student Portfolio</h1>
				<a href="#" className="flex items-center justify-end gap-2">
					bdottore
					<FaSignOutAlt className="size-[17px]" />
				</a>
			</header>

			<div className="flex min-h-0 flex-1">
				<Sidebar />
				<main className="flex min-w-0 flex-1 flex-col bg-white pt-1 pr-[30px] pb-[45px] pl-[15px]">
					<Message />
					<hr className="mb-4 shrink-0 border-[#dee2e6]" />
					<div className="mr-3.5 flex min-h-0 flex-1 flex-col border border-[#5b6770]">
						<ViewerToolbar />
						<div className="flex min-h-0 flex-1 justify-center overflow-hidden pt-[30px]">
							<ReportPage />
						</div>
					</div>
				</main>
			</div>

			<footer className="mb-0.5 grid h-[39px] shrink-0 grid-cols-[246px_1fr_124px] items-center bg-linear-to-b from-[#5b6770] to-[#d48434] text-white">
				<div className="flex items-center gap-[5px] pt-1 pl-[70px]">
					<svg viewBox="0 0 25 21" className="h-[21px] w-[25px]">
						<rect width="25" height="21" rx="3" fill="#06418a" />
						<path d="m4 6 3-2v13l-2-1zM8 4l2-1v14l-2 1z" fill="#dfe7f2" />
						<path d="M10 4h10v13H10z" fill="#fff" />
						<path d="M12 6h3v3h-3zM16 6.500h3M16 8.500h3M12 11.500h6M12 13.500h6M12 15.500h6" stroke="#06418a" fill="#06418a" />
					</svg>
					<div className="text-[#0b559f]">
						<p className="text-[11px]/[11px] font-semibold">Portfolio (+)</p>
						<p className="text-[4px]/[5px] text-black">Student Document Management</p>
					</div>
				</div>
				<span className="pt-0.5 text-center text-[15px]">APP2</span>
				<svg viewBox="0 0 92 26" className="mt-1 ml-4 h-[26px] w-[92px]">
					<path d="M0 3c12-4 26-2 36 6 6 5 8 9 10 11-6-4-10-6-16-7l-6-1c4 2 8 4 10 7C24 9 14 5 0 3z" fill="#1583c9" />
					<path d="M8 8c12 2 20 6 28 12-10-4-18-7-28-12z" fill="#5fb3e4" />
					<text x="39" y="8" fontSize="6" fontWeight="700" fontFamily="Open Sans, sans-serif" fill="#1279bd">
						EDUCATIONAL
					</text>
					<text x="36" y="21" fontSize="16" fontWeight="700" fontStyle="italic" fontFamily="Liberation Serif, serif" fill="#1279bd">
						Vistas
					</text>
				</svg>
			</footer>
		</div>
	);
}
